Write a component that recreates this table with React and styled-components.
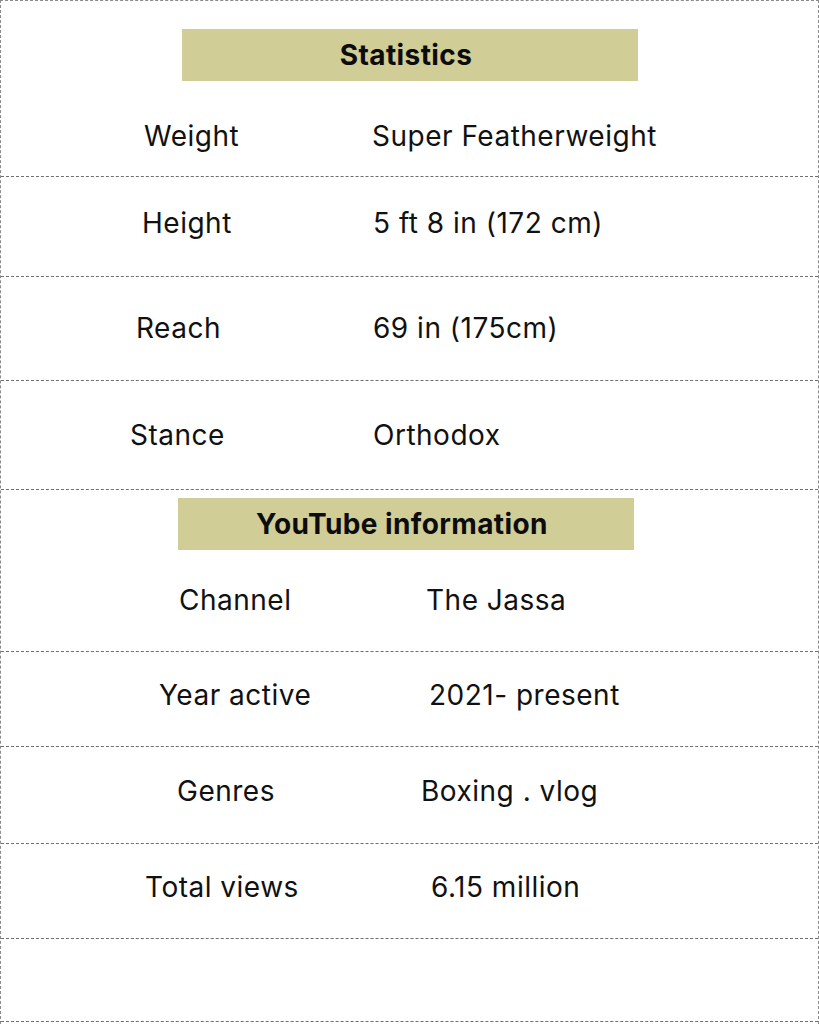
import styled, { createGlobalStyle } from "styled-components";

const GlobalStyle = createGlobalStyle`
  html, body {
    margin: 0;
    padding: 0;
    background: #ffffff;
  }
  body {
    font-family: Inter, "Open Sans", Arial, sans-serif;
    color: #111;
  }
`;

const stats = [
  { label: "Weight", value: "Super Featherweight", lx: 143, vx: 371, h: 87, pt: 5, pb: 0 },
  { label: "Height", value: "5 ft 8 in (172 cm)", lx: 141, vx: 372, h: 100, pt: 0, pb: 8 },
  { label: "Reach", value: "69 in (175cm)", lx: 135, vx: 372, h: 104, pt: 0, pb: 2 },
  { label: "Stance", value: "Orthodox", lx: 129, vx: 372, h: 109, pt: 0, pb: 0 },
];

const youtube = [
  { label: "Channel", value: "The Jassa", lx: 178, vx: 425, h: 103, pt: 0, pb: 0 },
  { label: "Year active", value: "2021- present", lx: 158, vx: 428, h: 95, pt: 0, pb: 9 },
  { label: "Genres", value: "Boxing . vlog", lx: 176, vx: 420, h: 97, pt: 0, pb: 9 },
  { label: "Total views", value: "6.15 million", lx: 144, vx: 430, h: 95, pt: 0, pb: 9 },
];

const InfoRows = ({ rows }) =>
  rows.map((r) => (
    <Row key={r.label} $h={r.h} $pt={r.pt} $pb={r.pb} $lx={r.lx}>
      <Label $w={r.vx - r.lx}>{r.label}</Label>
      <Value>{r.value}</Value>
    </Row>
  ));

export default function App() {
  return (
    <>
      <GlobalStyle />
      <Page>
        <HeadSection $h={89} $pt={28}>
          <HeadBox $ml={181}>Statistics</HeadBox>
        </HeadSection>
        <InfoRows rows={stats} />
        <HeadSection $h={59} $pt={8}>
          <HeadBox $ml={177}>YouTube information</HeadBox>
        </HeadSection>
        <InfoRows rows={youtube} />
        <EmptyRow />
      </Page>
    </>
  );
}

const Page = styled.div`
  width: 819px;
  height: 1024px;
  box-sizing: border-box;
  border: 1px dashed #8a8a8a;
  border-bottom: none;
  display: flex;
  flex-direction: column;
  overflow: hidden;
`;

const HeadSection = styled.div`
  height: ${(p) => p.$h}px;
  box-sizing: border-box;
  padding-top: ${(p) => p.$pt}px;
  flex-shrink: 0;
`;

const HeadBox = styled.div`
  width: 456px;
  height: 52px;
  box-sizing: border-box;
  padding-right: 8px;
  margin-left: ${(p) => p.$ml}px;
  background: #d1cd97;
  display: flex;
  align-items: center;
  justify-content: center;
  font-weight: 700;
  font-size: 28px;
  letter-spacing: 0.4px;
  color: #0c0c0c;
`;

const Row = styled.div`
  height: ${(p) => p.$h}px;
  flex-shrink: 0;
  box-sizing: border-box;
  padding: ${(p) => p.$pt}px 0 ${(p) => p.$pb}px ${(p) => p.$lx}px;
  border-bottom: 1px dashed #6f6f6f;
  display: flex;
  align-items: center;
  font-size: 28px;
  letter-spacing: 0.5px;
  color: #111;
`;

const Label = styled.span`
  width: ${(p) => p.$w}px;
  flex-shrink: 0;
`;

const Value = styled.span`
  white-space: nowrap;
`;

const EmptyRow = styled.div`
  height: 83px;
  flex-shrink: 0;
  box-sizing: border-box;
  border-bottom: 1px dashed #6f6f6f;
`;
